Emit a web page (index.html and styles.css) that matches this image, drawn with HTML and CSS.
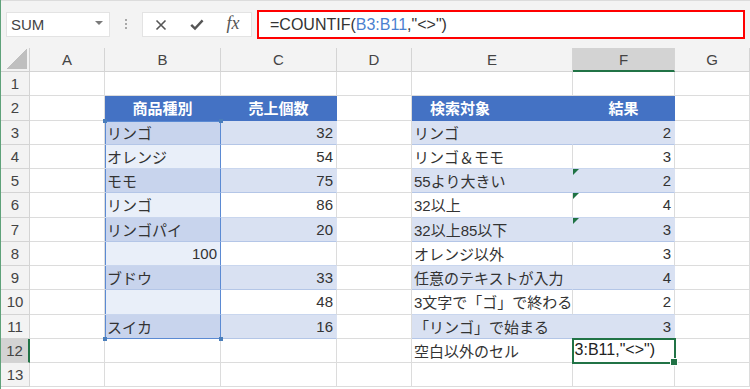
FILE: index.html
```html
<!DOCTYPE html>
<html>
<head>
    <meta charset="utf-8">
    <title>COUNTIF 空白以外のセル</title>
    <link rel="stylesheet" href="styles.css">
</head>
<body>
    <div class="toolbar">
        <div class="namebox">SUM<span class="drop"></span></div>
        <div class="grip"></div>
        <div class="fbtns">
            <div class="fbtn">
                <svg width="12" height="12" viewBox="0 0 12 12"><path d="M1.5 1.5l9 9M10.5 1.5l-9 9" stroke="#555" stroke-width="1.6" fill="none"/></svg>
            </div>
            <div class="fbtn">
                <svg width="14" height="12" viewBox="0 0 14 12"><path d="M1.2 5.8l3.8 3.8 7.6-8.2" stroke="#555" stroke-width="2.4" fill="none"/></svg>
            </div>
            <div class="fbtn fx">fx</div>
        </div>
        <div class="fbox">=COUNTIF(<span class="ref">B3:B11</span>,"&lt;&gt;")</div>
    </div>

    <div class="sheet">
        <div class="corner"></div><div class="ch">A</div><div class="ch">B</div><div class="ch">C</div><div class="ch">D</div><div class="ch">E</div><div class="ch on">F</div><div class="ch">G</div>

        <div class="rh">1</div><div></div><div></div><div></div><div></div><div></div><div></div><div></div>

        <div class="rh">2</div><div></div><div class="th">商品種別</div><div class="th">売上個数</div><div></div><div class="th th-left">検索対象</div><div class="th">結果</div><div></div>

        <div class="rh">3</div><div></div><div class="band sel sel-top">リンゴ</div><div class="band n">32</div><div></div><div class="band">リンゴ</div><div class="band n">2</div><div></div>

        <div class="rh">4</div><div></div><div class="tw sel">オレンジ</div><div class="tw n">54</div><div></div><div class="tw">リンゴ＆モモ</div><div class="tw n">3</div><div></div>

        <div class="rh">5</div><div></div><div class="band sel">モモ</div><div class="band n">75</div><div></div><div class="band">55より大きい</div><div class="band n err">2</div><div></div>

        <div class="rh">6</div><div></div><div class="tw sel">リンゴ</div><div class="tw n">86</div><div></div><div class="tw">32以上</div><div class="tw n err">4</div><div></div>

        <div class="rh">7</div><div></div><div class="band sel">リンゴパイ</div><div class="band n">20</div><div></div><div class="band">32以上85以下</div><div class="band n err">3</div><div></div>

        <div class="rh">8</div><div></div><div class="tw sel n">100</div><div class="tw"></div><div></div><div class="tw">オレンジ以外</div><div class="tw n">3</div><div></div>

        <div class="rh">9</div><div></div><div class="band sel">ブドウ</div><div class="band n">33</div><div></div><div class="band">任意のテキストが入力</div><div class="band n">4</div><div></div>

        <div class="rh">10</div><div></div><div class="tw sel"></div><div class="tw n">48</div><div></div><div class="tw">3文字で「ゴ」で終わる</div><div class="tw n">2</div><div></div>

        <div class="rh">11</div><div></div><div class="band sel sel-bot">スイカ</div><div class="band n">16</div><div></div><div class="band">「リンゴ」で始まる</div><div class="band n">3</div><div></div>

        <div class="rh on">12</div><div></div><div></div><div></div><div></div><div>空白以外のセル</div><div class="active"><div class="edit-text"><span>=COUNTIF(B3:B11,"&lt;&gt;")</span></div></div><div></div>

        <div class="rh">13</div><div></div><div></div><div></div><div></div><div></div><div></div><div></div>
    </div>
</body>
</html>
```

FILE: styles.css
```css
* {
    box-sizing: border-box;
}

body {
    margin: 0;
    width: 750px;
    height: 389px;
    overflow: hidden;
    background: #fff;
    border-left: 1px solid #5fa27a;
    font-family: 'Liberation Sans', 'Noto Sans CJK JP', sans-serif;
    color: #333;
}

/* formula bar */
.toolbar {
    height: 48px;
    display: flex;
    align-items: center;
    padding-left: 5px;
    background: #f3f3f3;
    border-top: 1px solid #dcdcdc;
}
.namebox {
    width: 104px;
    height: 25px;
    display: flex;
    align-items: center;
    justify-content: space-between;
    padding: 0 6px 0 4px;
    background: #fff;
    border: 1px solid #e3e3e3;
    font-size: 15px;
    color: #444;
}
.drop {
    border-left: 4px solid transparent;
    border-right: 4px solid transparent;
    border-top: 4px solid #7a7a7a;
    margin-bottom: 3px;
}
.grip {
    width: 2px;
    height: 11px;
    margin: 0 15px;
    background: linear-gradient(#a8a8a8 2px, transparent 2px) 0 0 / 2px 4px repeat-y;
}
.fbtns {
    width: 110px;
    height: 25px;
    display: flex;
    background: #fff;
    border: 1px solid #e3e3e3;
}
.fbtn {
    width: 36px;
    display: flex;
    align-items: center;
    justify-content: center;
}
.fx {
    font-family: 'Liberation Serif', serif;
    font-style: italic;
    font-size: 18px;
    color: #555;
    padding-bottom: 2px;
}
.fbox {
    width: 488px;
    height: 29px;
    margin-left: 5px;
    display: flex;
    align-items: center;
    padding-left: 11px;
    background: #fff;
    border: 2px solid #ff0000;
    font-size: 16px;
    color: #333;
}
.ref {
    color: #4a7fd0;
}

/* grid */
.sheet {
    display: grid;
    grid-template-columns: 29px 75px 116px 116px 75px 161px 102px 75px;
    grid-template-rows: 24px;
    grid-auto-rows: 24.25px;
}
.sheet > div {
    display: flex;
    align-items: center;
    padding: 0 2px;
    border-right: 1px solid #dcdcdc;
    border-bottom: 1px solid #dcdcdc;
    font-size: 15px;
    white-space: nowrap;
    overflow: hidden;
}
.sheet .corner {
    background: #f3f3f3 linear-gradient(135deg, transparent 50%, #bfbfbf 50%) no-repeat right 2px bottom 2px / 20px 20px;
    border-color: #d0d0d0;
}
.sheet .ch {
    justify-content: center;
    background: #f3f3f3;
    border-color: #d4d4d4;
    color: #444;
}
.sheet .rh {
    justify-content: center;
    background: #f3f3f3;
    border-color: #d4d4d4;
    color: #444;
}
.sheet .ch.on {
    background: #d3d3d3;
    border-bottom: 2px solid #217346;
}
.sheet .rh.on {
    background: #d3d3d3;
    border-right: 2px solid #217346;
}

/* tables */
.sheet .th {
    justify-content: center;
    background: #4472c4;
    border-color: #4472c4;
    color: #fff;
    font-weight: bold;
}
.sheet .th-left {
    justify-content: flex-start;
    padding-left: 18px;
}
.sheet .band {
    background: #d9e1f2;
    border-right-color: #d9e1f2;
    border-bottom-color: #b4c6e7;
}
.sheet .tw {
    border-bottom-color: #c9d6ee;
}
.sheet .n {
    justify-content: flex-end;
    padding-right: 3px;
}

/* selection B3:B11 */
.sheet .sel {
    background: #e9eff9;
    border-right-color: #5b8ad3;
    box-shadow: inset 1px 0 #5b8ad3;
}
.sheet .sel.band {
    background: #c8d4ed;
}
.sheet .sel-top {
    position: relative;
    overflow: visible;
    box-shadow: inset 1px 0 #5b8ad3, inset 0 1px #5b8ad3;
}
.sheet .sel-bot {
    position: relative;
    overflow: visible;
    border-bottom-color: #5b8ad3;
}
.sel-top::before,
.sel-top::after,
.sel-bot::before,
.sel-bot::after {
    content: '';
    position: absolute;
    width: 4px;
    height: 4px;
    background: #4a7ebb;
    z-index: 2;
}
.sel-top::before { left: -2px; top: -2px; }
.sel-top::after { right: -3px; top: -2px; }
.sel-bot::before { left: -2px; bottom: -3px; }
.sel-bot::after { right: -3px; bottom: -3px; }

/* error indicator */
.sheet .err {
    position: relative;
}
.err::before {
    content: '';
    position: absolute;
    top: 0;
    left: 0;
    border-top: 6px solid #1f7244;
    border-right: 6px solid transparent;
}

/* active cell F12 */
.sheet .active {
    position: relative;
    overflow: visible;
    padding: 0;
    outline: 2px solid #217346;
    outline-offset: -1px;
    font-size: 16px;
    color: #222;
}
.active::after {
    content: '';
    position: absolute;
    right: -4px;
    bottom: -4px;
    width: 6px;
    height: 6px;
    background: #217346;
    border: 1px solid #fff;
    z-index: 2;
}
.edit-text {
    flex: 1;
    height: 100%;
    display: flex;
    align-items: center;
    justify-content: flex-end;
    overflow: hidden;
    padding-right: 19px;
}
```
